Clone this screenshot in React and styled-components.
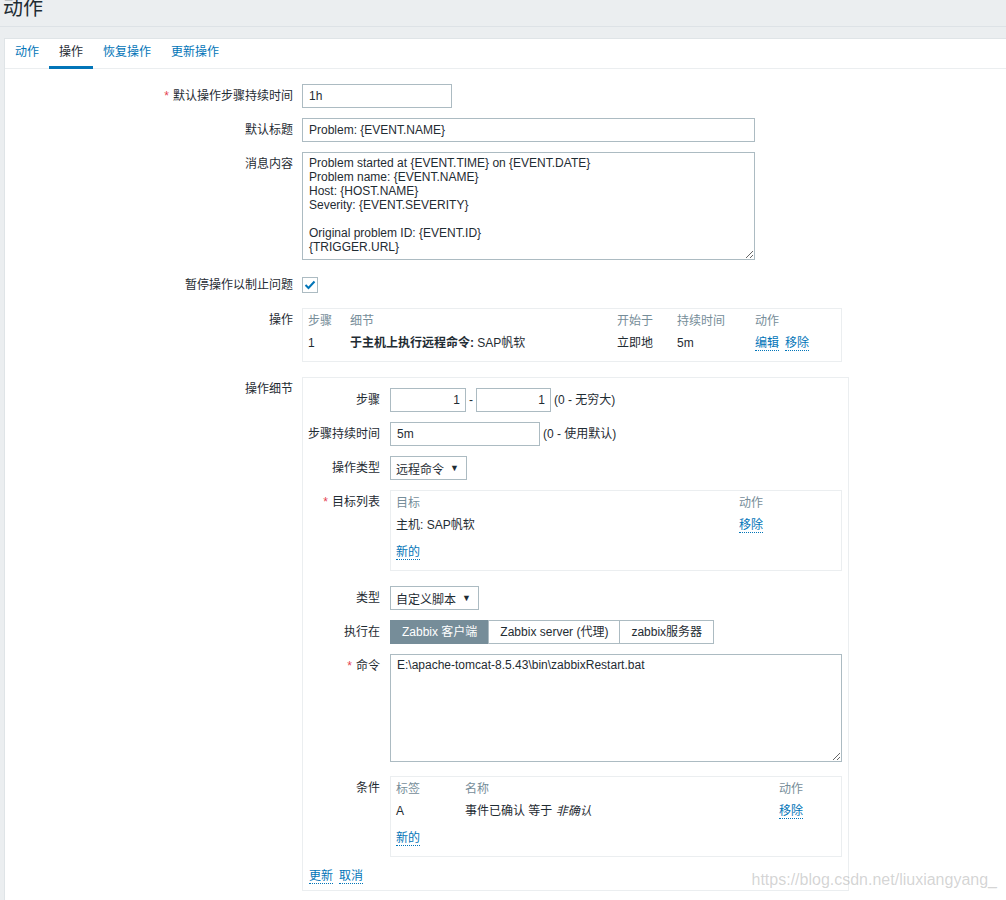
import React from 'react';
import styled, { createGlobalStyle } from 'styled-components';

const GlobalStyle = createGlobalStyle`
  html, body { margin: 0; padding: 0; background: #ebeef0; }
  body {
    font-family: "Liberation Sans", Arial, "Noto Sans CJK SC", sans-serif;
    font-size: 12px;
    color: #1f2c33;
    overflow: hidden;
  }
  * { box-sizing: border-box; }
`;

const Page = styled.div`
  position: relative;
  width: 1006px;
  height: 900px;
  overflow: hidden;
`;

const Header = styled.header`
  display: flex;
  align-items: flex-start;
  height: 27px;
  border-bottom: 1px solid #dde2e6;
  padding-left: 3px;
`;

const Title = styled.h1`
  margin: -4px 0 0;
  font-size: 20px;
  font-weight: normal;
  line-height: 24px;
  color: #1f2c33;
`;

const Card = styled.div`
  margin: 11px -30px 0 4px;
  background: #fff;
  border: 1px solid #dfe4e7;
  border-right: none;
  min-height: 900px;
`;

const TabBar = styled.nav`
  display: flex;
  height: 30px;
  padding-left: 0;
  border-bottom: 1px solid #ebeef0;
`;

const Tab = styled.a`
  display: block;
  height: 30px;
  margin-bottom: -1px;
  padding: 0 10px;
  line-height: 26px;
  color: ${p => (p.$active ? '#1f2c33' : '#0275b8')};
  border-bottom: 3px solid ${p => (p.$active ? '#0275b8' : 'transparent')};
  text-decoration: none;
  cursor: pointer;
`;

const Form = styled.div`
  padding-top: 15px;
`;

const Row = styled.div`
  display: flex;
  align-items: flex-start;
  gap: ${p => p.$gap || 9}px;
  margin-bottom: ${p => p.$mb ?? 10}px;
`;

const Label = styled.label`
  flex: 0 0 ${p => p.$w}px;
  text-align: right;
  line-height: 24px;
  white-space: nowrap;
  color: #1f2c33;
`;

const Req = styled.span`
  color: #e54251;
  margin-right: 4px;
`;

const TextInput = styled.input`
  width: ${p => p.$w}px;
  height: 24px;
  border: 1px solid #acbbc2;
  padding: 0 5px 0 6px;
  font: inherit;
  color: #1f2c33;
  background: #fff;
  outline: none;
  text-align: ${p => (p.$right ? 'right' : 'left')};
  border-radius: 0;
`;

const TextArea = styled.textarea`
  display: block;
  width: ${p => p.$w}px;
  height: 108px;
  border: 1px solid #acbbc2;
  padding: 3px 6px;
  font: inherit;
  line-height: 14px;
  color: #1f2c33;
  background: #fff;
  outline: none;
  border-radius: 0;
  overflow: hidden;
`;

const Inline = styled.div`
  display: flex;
  align-items: center;
  gap: ${p => p.$gap || 3}px;
  line-height: 24px;
  white-space: nowrap;
`;

const CheckBox = styled.span`
  display: flex;
  align-items: center;
  justify-content: center;
  width: 16px;
  height: 16px;
  margin-top: 4px;
  border: 1px solid #acbbc2;
  background: #fff;
`;

const Box = styled.div`
  width: ${p => (p.$w ? `${p.$w}px` : 'auto')};
  flex: ${p => (p.$w ? '0 0 auto' : '1 1 auto')};
  border: 1px solid #ebeef0;
  padding: ${p => p.$pad || '0 5px 7px'};
`;

const Grid = styled.div`
  display: grid;
  grid-template-columns: ${p => p.$cols};
`;

const HeadCell = styled.div`
  padding-top: 1px;
  line-height: 22px;
  color: #768d99;
  white-space: nowrap;
`;

const Cell = styled.div`
  height: 22px;
  line-height: 22px;
  white-space: nowrap;
  display: flex;
  align-items: center;
  gap: 6px;
`;

const FullCell = styled.div`
  grid-column: 1 / -1;
  padding-top: 5px;
  line-height: 22px;
`;

const Link = styled.a`
  color: #0275b8;
  text-decoration: none;
  border-bottom: 1px dotted #0275b8;
  line-height: 14px;
  cursor: pointer;
`;

const Bold = styled.b`
  font-weight: bold;
`;

const Select = styled.div`
  display: flex;
  align-items: center;
  gap: 6px;
  height: 24px;
  padding: 0 7px 0 5px;
  border: 1px solid #acbbc2;
  background: #fff;
  white-space: nowrap;
`;

const Arrow = styled.span`
  font-size: 9px;
  color: #1f2c33;
`;

const Segments = styled.div`
  display: flex;
`;

const Segment = styled.span`
  height: 24px;
  line-height: 22px;
  padding: 0 11px;
  border: 1px solid #acbbc2;
  margin-left: ${p => (p.$first ? 0 : -1)}px;
  background: ${p => (p.$active ? '#768d99' : '#fff')};
  color: ${p => (p.$active ? '#fff' : '#1f2c33')};
  border-color: ${p => (p.$active ? '#768d99' : '#acbbc2')};
  white-space: nowrap;
`;

const Actions = styled.div`
  display: flex;
  align-items: center;
  gap: 6px;
  height: 22px;
  padding-left: 1px;
`;

const Italic = styled.i`
  font-style: italic;
`;

const Watermark = styled.div`
  position: absolute;
  right: 9px;
  top: 871px;
  font-size: 16px;
  color: rgba(160, 160, 160, 0.45);
  font-family: "Liberation Sans", Arial, sans-serif;
  pointer-events: none;
`;

const CheckIcon = () => (
  <svg width="12" height="10" viewBox="0 0 12 10">
    <polyline points="1.5,5 4.5,8 10.5,1.5" fill="none" stroke="#0275b8" strokeWidth="2" />
  </svg>
);

const message = `Problem started at {EVENT.TIME} on {EVENT.DATE}
Problem name: {EVENT.NAME}
Host: {HOST.NAME}
Severity: {EVENT.SEVERITY}

Original problem ID: {EVENT.ID}
{TRIGGER.URL}`;

export default function App() {
  return (
    <Page>
      <GlobalStyle />
      <Header>
        <Title>动作</Title>
      </Header>
      <Card>
        <TabBar>
          <Tab>动作</Tab>
          <Tab $active>操作</Tab>
          <Tab>恢复操作</Tab>
          <Tab>更新操作</Tab>
        </TabBar>
        <Form>
          <Row>
            <Label $w={288}><Req>*</Req>默认操作步骤持续时间</Label>
            <TextInput $w={150} readOnly value="1h" />
          </Row>
          <Row>
            <Label $w={288}>默认标题</Label>
            <TextInput $w={453} readOnly value="Problem: {EVENT.NAME}" />
          </Row>
          <Row $mb={13}>
            <Label $w={288}>消息内容</Label>
            <TextArea $w={453} readOnly value={message} />
          </Row>
          <Row $mb={11}>
            <Label $w={288}>暂停操作以制止问题</Label>
            <CheckBox><CheckIcon /></CheckBox>
          </Row>
          <Row $mb={15}>
            <Label $w={288}>操作</Label>
            <Box $w={540}>
              <Grid $cols="42px 267px 60px 78px 1fr">
                <HeadCell>步骤</HeadCell>
                <HeadCell>细节</HeadCell>
                <HeadCell>开始于</HeadCell>
                <HeadCell>持续时间</HeadCell>
                <HeadCell>动作</HeadCell>
                <Cell>1</Cell>
                <Cell><span><Bold>于主机上执行远程命令:</Bold> SAP帆软</span></Cell>
                <Cell>立即地</Cell>
                <Cell>5m</Cell>
                <Cell><Link>编辑</Link><Link>移除</Link></Cell>
              </Grid>
            </Box>
          </Row>
          <Row $mb={0}>
            <Label $w={288}>操作细节</Label>
            <Box $w={547} $pad="10px 6px 3px 5px">
              <Row $gap={10}>
                <Label $w={72}>步骤</Label>
                <Inline>
                  <TextInput $w={76} $right readOnly value="1" />
                  <span>-</span>
                  <TextInput $w={75} $right readOnly value="1" />
                  <span>(0 - 无穷大)</span>
                </Inline>
              </Row>
              <Row $gap={10}>
                <Label $w={72}>步骤持续时间</Label>
                <Inline>
                  <TextInput $w={150} readOnly value="5m" />
                  <span>(0 - 使用默认)</span>
                </Inline>
              </Row>
              <Row $gap={10}>
                <Label $w={72}>操作类型</Label>
                <Select>远程命令<Arrow>▼</Arrow></Select>
              </Row>
              <Row $gap={10} $mb={15}>
                <Label $w={72}><Req>*</Req>目标列表</Label>
                <Box>
                  <Grid $cols="343px 1fr">
                    <HeadCell>目标</HeadCell>
                    <HeadCell>动作</HeadCell>
                    <Cell>主机: SAP帆软</Cell>
                    <Cell><Link>移除</Link></Cell>
                    <FullCell><Link>新的</Link></FullCell>
                  </Grid>
                </Box>
              </Row>
              <Row $gap={10}>
                <Label $w={72}>类型</Label>
                <Select>自定义脚本<Arrow>▼</Arrow></Select>
              </Row>
              <Row $gap={10}>
                <Label $w={72}>执行在</Label>
                <Segments>
                  <Segment $first $active>Zabbix 客户端</Segment>
                  <Segment>Zabbix server (代理)</Segment>
                  <Segment>zabbix服务器</Segment>
                </Segments>
              </Row>
              <Row $gap={10} $mb={14}>
                <Label $w={72}><Req>*</Req>命令</Label>
                <TextArea $w={452} readOnly value={'E:\\apache-tomcat-8.5.43\\bin\\zabbixRestart.bat'} />
              </Row>
              <Row $gap={10} $mb={8}>
                <Label $w={72}>条件</Label>
                <Box>
                  <Grid $cols="69px 314px 1fr">
                    <HeadCell>标签</HeadCell>
                    <HeadCell>名称</HeadCell>
                    <HeadCell>动作</HeadCell>
                    <Cell>A</Cell>
                    <Cell><span>事件已确认 等于 <Italic>非确认</Italic></span></Cell>
                    <Cell><Link>移除</Link></Cell>
                    <FullCell><Link>新的</Link></FullCell>
                  </Grid>
                </Box>
              </Row>
              <Actions>
                <Link>更新</Link>
                <Link>取消</Link>
              </Actions>
            </Box>
          </Row>
        </Form>
      </Card>
      <Watermark>https://blog.csdn.net/liuxiangyang_</Watermark>
    </Page>
  );
}
